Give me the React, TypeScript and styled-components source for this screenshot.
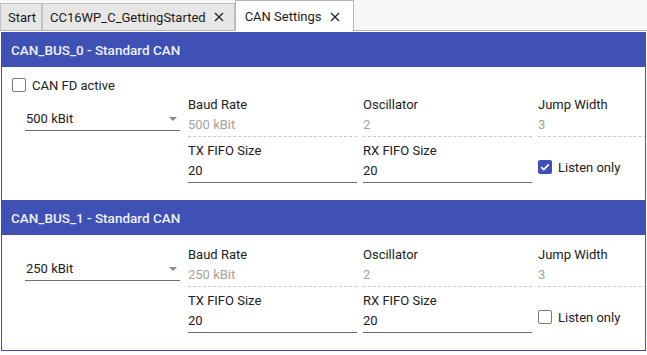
import React from "react";
import styled, { createGlobalStyle } from "styled-components";

const BLUE = "#3f51b5";

type FieldData = { label: string; value: string; disabled?: boolean };

type Bus = {
  title: string;
  baud: string;
  fdOption: boolean;
  listenOnly: boolean;
};

const buses: Bus[] = [
  { title: "CAN_BUS_0 - Standard CAN", baud: "500 kBit", fdOption: true, listenOnly: true },
  { title: "CAN_BUS_1 - Standard CAN", baud: "250 kBit", fdOption: false, listenOnly: false },
];

const CloseIcon = () => (
  <svg width="10" height="10" viewBox="0 0 10 10">
    <path d="M1 1 L9 9 M9 1 L1 9" stroke="#222" strokeWidth="1.3" fill="none" />
  </svg>
);

const CheckBox = ({ checked }: { checked: boolean }) => (
  <Box $checked={checked}>
    {checked && (
      <svg width="12" height="12" viewBox="0 0 12 12">
        <path d="M2.2 6.2 L4.8 8.6 L9.8 3.4" stroke="#fff" strokeWidth="1.8" fill="none" />
      </svg>
    )}
  </Box>
);

const Field = ({ label, value, disabled }: FieldData) => (
  <FieldWrap>
    <FieldLabel>{label}</FieldLabel>
    <FieldValue $disabled={disabled}>{value}</FieldValue>
  </FieldWrap>
);

const BusCard = ({ bus }: { bus: Bus }) => (
  <>
    <CardHeader>{bus.title}</CardHeader>
    <CardBody $top={bus.fdOption ? 8 : 12}>
      {bus.fdOption && (
        <CheckRow>
          <CheckBox checked={false} />
          <span>CAN FD active</span>
        </CheckRow>
      )}
      <Layout>
        <Select>
          <span>{bus.baud}</span>
          <SelectArrow />
        </Select>
        <Fields>
          <Field label="Baud Rate" value={bus.baud} disabled />
          <Field label="Oscillator" value="2" disabled />
          <Field label="Jump Width" value="3" disabled />
          <Field label="TX FIFO Size" value="20" />
          <Field label="RX FIFO Size" value="20" />
          <ListenOnly>
            <CheckBox checked={bus.listenOnly} />
            <span>Listen only</span>
          </ListenOnly>
        </Fields>
      </Layout>
    </CardBody>
  </>
);

const App = () => (
  <>
    <GlobalStyle />
    <TabBar>
      <Tab>Start</Tab>
      <Tab>
        CC16WP_C_GettingStarted
        <CloseIcon />
      </Tab>
      <Tab $active>
        CAN Settings
        <CloseIcon />
      </Tab>
    </TabBar>
    <Page>
      {buses.map((b) => (
        <BusCard key={b.title} bus={b} />
      ))}
    </Page>
  </>
);

export default App;

const GlobalStyle = createGlobalStyle`
  body {
    margin: 0;
    background: #fff;
    font-family: Roboto, "Liberation Sans", sans-serif;
    color: #212121;
    overflow: hidden;
  }
`;

const TabBar = styled.div`
  display: flex;
  align-items: flex-end;
  height: 30px;
  background: #f7f7f7;
  border-bottom: 1px solid #b4b4b4;
`;

const Tab = styled.div<{ $active?: boolean }>`
  display: flex;
  align-items: center;
  gap: 8px;
  box-sizing: border-box;
  height: ${(p) => (p.$active ? "31px" : "27px")};
  margin-bottom: ${(p) => (p.$active ? "-1px" : "0")};
  padding: ${(p) => (p.$active ? "1px 13px 0 9px" : "0 10px 0 7px")};
  background: ${(p) => (p.$active ? "#fff" : "#e6e6e6")};
  border: 1px solid ${(p) => (p.$active ? "#b4b4b4" : "#c2c2c2")};
  border-bottom: none;
  font-size: 13px;
  color: #1a1a1a;
  &:first-child {
    padding-right: 5px;
  }
`;

const Page = styled.div`
  margin: 1px 1px 0 1px;
  border: 1px solid ${BLUE};
  border-top: none;
  overflow: hidden;
`;

const CardHeader = styled.div`
  height: 35px;
  display: flex;
  align-items: center;
  padding-left: 9px;
  background: ${BLUE};
  color: #eef0fa;
  font-size: 13.5px;
  font-weight: 500;
`;

const CardBody = styled.div<{ $top: number }>`
  padding: ${(p) => p.$top}px 0 17px 23px;
`;

const CheckRow = styled.div`
  display: flex;
  align-items: center;
  gap: 6px;
  height: 20px;
  margin: 0 0 2px -13px;
  font-size: 13px;
`;

const Box = styled.span<{ $checked: boolean }>`
  box-sizing: border-box;
  width: 14px;
  height: 14px;
  border-radius: 2px;
  display: inline-flex;
  align-items: center;
  justify-content: center;
  background: ${(p) => (p.$checked ? BLUE : "#fff")};
  border: ${(p) => (p.$checked ? "none" : "1.5px solid #7a7a7a")};
`;

const Layout = styled.div`
  display: grid;
  grid-template-columns: 155px auto;
  column-gap: 8px;
  align-items: start;
`;

const Select = styled.div`
  position: relative;
  margin-top: 10px;
  height: 23px;
  display: flex;
  align-items: center;
  border-bottom: 1px solid #6e6e6e;
  font-size: 13px;
  padding-left: 1px;
`;

const SelectArrow = styled.span`
  position: absolute;
  right: 3px;
  top: 10px;
  width: 0;
  height: 0;
  border-left: 4px solid transparent;
  border-right: 4px solid transparent;
  border-top: 4px solid #8a8a8a;
`;

const Fields = styled.div`
  display: grid;
  grid-template-columns: repeat(3, 169px);
  column-gap: 6px;
  row-gap: 6px;
`;

const FieldWrap = styled.div`
  display: flex;
  flex-direction: column;
`;

const FieldLabel = styled.div`
  height: 16px;
  line-height: 16px;
  font-size: 13px;
  color: #212121;
`;

const FieldValue = styled.div<{ $disabled?: boolean }>`
  height: 23px;
  line-height: 23px;
  font-size: 13px;
  color: ${(p) => (p.$disabled ? "#a2a2a2" : "#212121")};
  border-bottom: 1px ${(p) => (p.$disabled ? "dashed #c8c8c8" : "solid #6e6e6e")};
`;

const ListenOnly = styled.div`
  display: flex;
  align-items: center;
  gap: 6px;
  height: 20px;
  margin-top: 14px;
  font-size: 13px;
`;
